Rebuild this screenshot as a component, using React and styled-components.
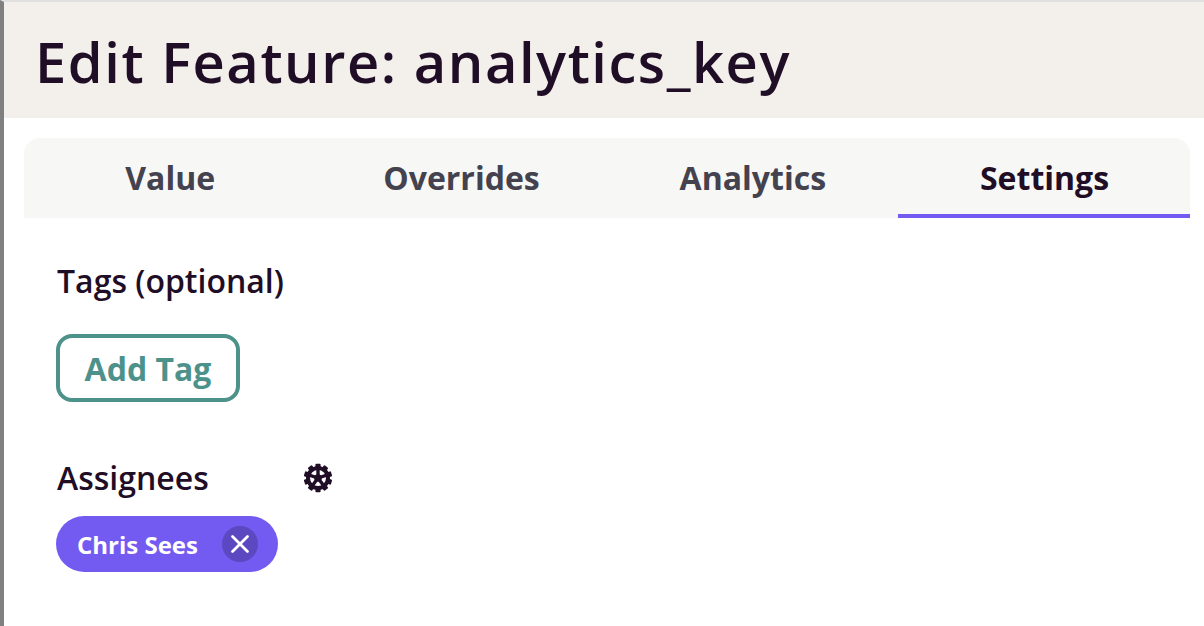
import React from "react";
import styled, { createGlobalStyle } from "styled-components";

const GlobalStyle = createGlobalStyle`
  html, body {
    margin: 0;
    padding: 0;
    background: #fff;
    font-family: "Open Sans", "Liberation Sans", sans-serif;
    color: #1f0e26;
  }
`;

const tabs = ["Value", "Overrides", "Analytics", "Settings"];

const teeth = [0, 1, 2, 3, 4, 5, 6, 7, 8, 9];
const spokes = [0, 72, 144, 216, 288];

function GearIcon() {
  return (
    <svg width="30" height="30" viewBox="0 0 30 30" fill="none">
      {teeth.map((t) => (
        <rect
          key={t}
          x="12.4"
          y="0.8"
          width="5.2"
          height="5"
          rx="1"
          fill="#1f0e26"
          transform={`rotate(${t * 36} 15 15)`}
        />
      ))}
      <circle cx="15" cy="15" r="10" stroke="#1f0e26" strokeWidth="4" />
      {spokes.map((a) => (
        <line
          key={a}
          x1="15"
          y1="15"
          x2="15"
          y2="5"
          stroke="#1f0e26"
          strokeWidth="3.4"
          transform={`rotate(${a} 15 15)`}
        />
      ))}
      <circle cx="15" cy="15" r="3.8" fill="#1f0e26" />
    </svg>
  );
}

function CloseIcon() {
  return (
    <svg width="20" height="20" viewBox="0 0 20 20" fill="none">
      <path
        d="M2.5 2.5L17.5 17.5M17.5 2.5L2.5 17.5"
        stroke="#fff"
        strokeWidth="2.8"
        strokeLinecap="round"
      />
    </svg>
  );
}

export default function App() {
  return (
    <Page>
      <GlobalStyle />
      <Header>
        <Title>Edit Feature: analytics_key</Title>
      </Header>
      <TabBar>
        {tabs.map((t) => (
          <Tab key={t} $active={t === "Settings"}>
            {t}
          </Tab>
        ))}
      </TabBar>
      <Body>
        <Label>Tags (optional)</Label>
        <AddTag>Add Tag</AddTag>
        <AssigneeRow>
          <AssigneeLabel>Assignees</AssigneeLabel>
          <GearIcon />
        </AssigneeRow>
        <Chip>
          Chris Sees
          <ChipClose>
            <CloseIcon />
          </ChipClose>
        </Chip>
      </Body>
    </Page>
  );
}

const Page = styled.div`
  width: 1204px;
  height: 626px;
  box-sizing: border-box;
  overflow: hidden;
  border-top: 2px solid #e0e0e0;
  border-left: 4px solid #808080;
  background: #fff;
`;

const Header = styled.div`
  height: 116px;
  background: #f3f0ec;
  display: flex;
  align-items: center;
  padding: 1px 0 0 31px;
  box-sizing: border-box;
`;

const Title = styled.h1`
  margin: 0;
  font-size: 56px;
  font-weight: 600;
  line-height: 1;
  letter-spacing: 1.55px;
  color: #1f0e26;
  white-space: nowrap;
`;

const TabBar = styled.div`
  display: grid;
  grid-template-columns: 1fr 1fr 1fr 292px;
  margin: 20px 14px 0 20px;
  height: 80px;
  background: #f7f7f5;
  border-radius: 16px 16px 0 0;
`;

const Tab = styled.div`
  display: flex;
  align-items: center;
  justify-content: center;
  box-sizing: border-box;
  padding: 2px 0 0 1px;
  font-size: 32px;
  font-weight: 700;
  color: ${(p) => (p.$active ? "#1f0e26" : "#44424e")};
  border-bottom: 4px solid ${(p) => (p.$active ? "#735bf2" : "transparent")};
`;

const Body = styled.div`
  padding: 44px 0 0 53px;
  display: flex;
  flex-direction: column;
  align-items: flex-start;
`;

const Label = styled.div`
  font-size: 32px;
  font-weight: 600;
  line-height: 40px;
  color: #1f0e26;
  margin-top: -1px;
`;

const AddTag = styled.button`
  margin-top: 33px;
  margin-left: -1px;
  height: 68px;
  width: 184px;
  box-sizing: border-box;
  background: #fff;
  border: 4px solid #4d928a;
  border-radius: 16px;
  font-family: inherit;
  font-size: 32px;
  font-weight: 700;
  color: #4d928a;
  padding: 0;
`;

const AssigneeRow = styled.div`
  margin-top: 56px;
  height: 40px;
  display: flex;
  align-items: center;
`;

const AssigneeLabel = styled(Label)`
  width: 246px;
  margin-top: 0;
`;

const Chip = styled.div`
  margin-top: 18px;
  margin-left: -1px;
  height: 56px;
  width: 222px;
  box-sizing: border-box;
  background: #735bf2;
  border-radius: 28px;
  display: flex;
  align-items: center;
  justify-content: space-between;
  padding: 0 20px 0 21px;
  color: #fff;
  font-size: 24px;
  font-weight: 700;
`;

const ChipClose = styled.span`
  width: 36px;
  height: 36px;
  border-radius: 50%;
  background: #5c49c2;
  display: flex;
  align-items: center;
  justify-content: center;
`;
